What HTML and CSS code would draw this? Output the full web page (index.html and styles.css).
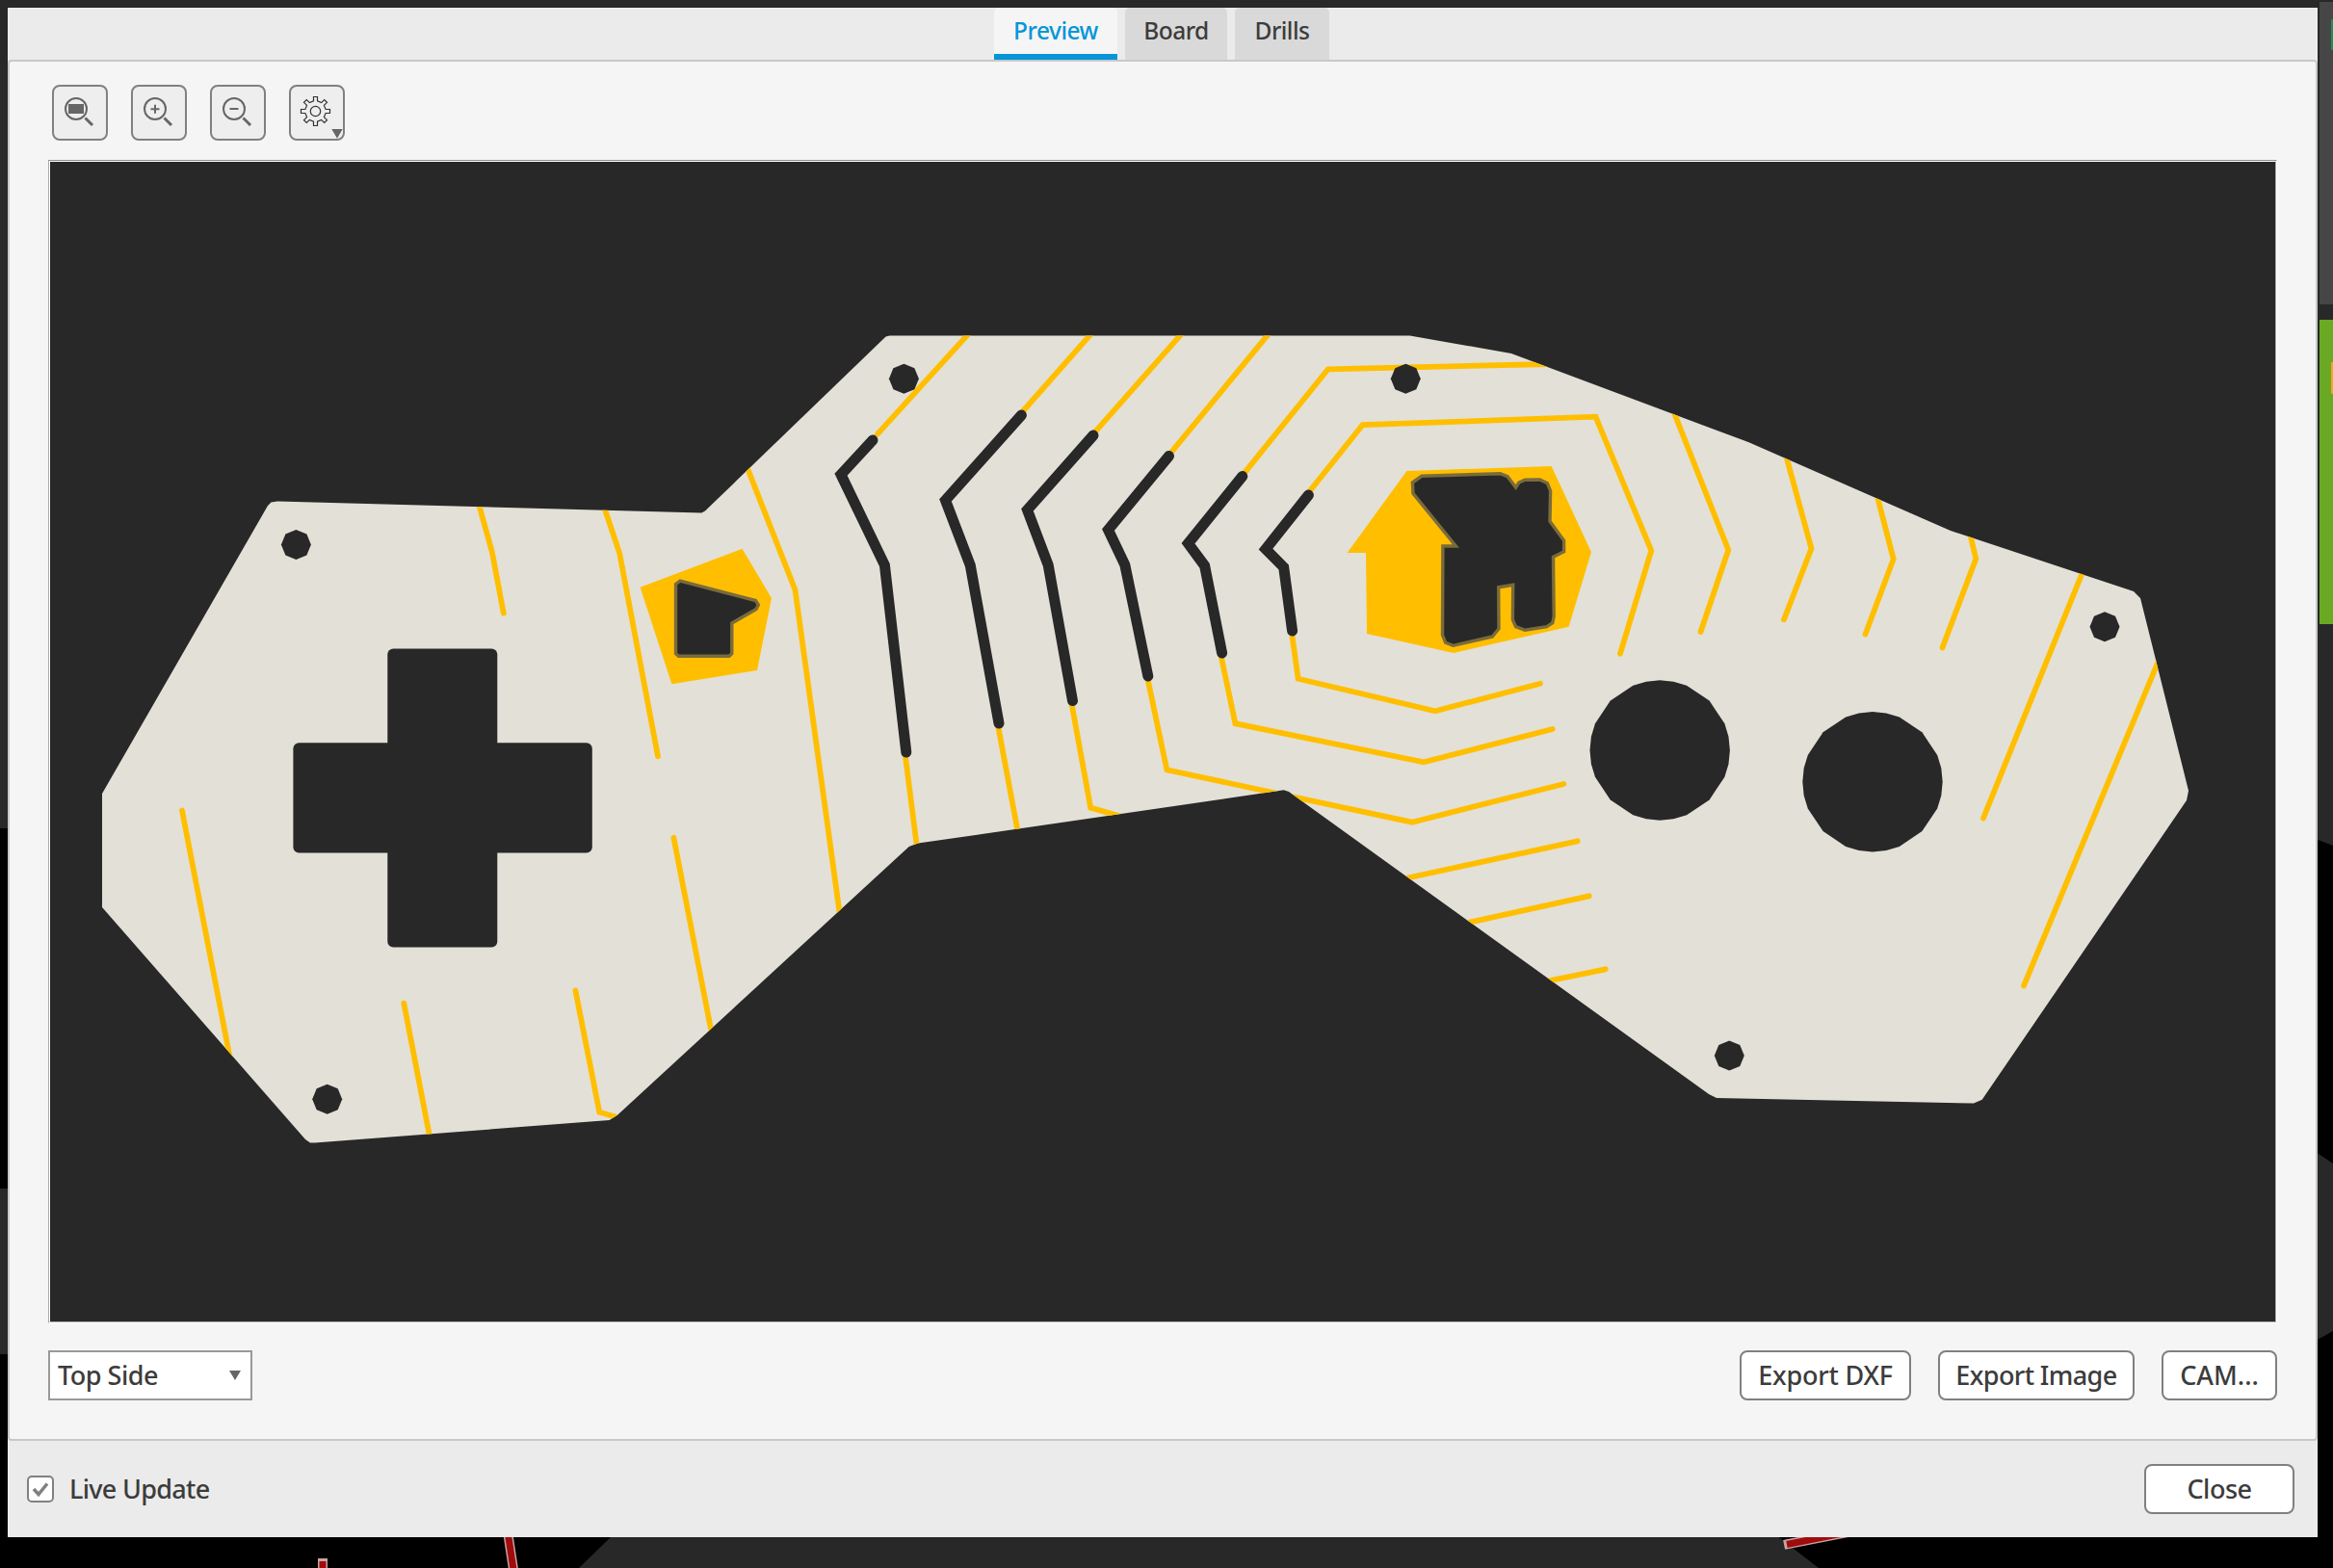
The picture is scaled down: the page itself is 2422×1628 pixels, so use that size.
FILE: index.html
```html
<!DOCTYPE html>
<html lang="en">
<head>
<meta charset="utf-8">
<title>Manufacturing Preview</title>
<link rel="stylesheet" href="styles.css">
</head>
<body>
<svg class="backdrop" viewBox="0 0 2422 1628" aria-hidden="true">
  <rect width="2422" height="1628" fill="#000"/>
  <rect width="2422" height="8" fill="#282828"/>
  <rect width="10" height="860" fill="#282828"/>
  <rect y="1234" width="10" height="172" fill="#282828"/>
  <path d="M2404 0H2422V878L2404 871ZM2404 1196L2422 1208V1382L2404 1392Z" fill="#282828"/>
  <rect x="2408" y="2" width="14" height="314" fill="#464646"/>
  <rect x="2420" y="20" width="4" height="32" rx="1" fill="#1f9150"/>
  <rect x="2408" y="332" width="14" height="316" fill="#6aa924"/>
  <rect x="2420" y="376" width="4" height="33" rx="1" fill="#f5a523"/>
  <path d="M636 1594L601 1628H1888L1844 1594Z" fill="#282828"/>
  <g class="trace-edge"><path d="M527 1590L534 1636M335 1623V1636M1857 1603L1918 1591"/></g>
  <g class="trace"><path d="M527 1590L534 1636M335 1621V1636M1855 1603.500L1918 1591"/></g>
</svg>

<main class="dialog">
  <nav class="tabs">
    <div class="tab tab-active">Preview</div>
    <div class="tab tab-board">Board</div>
    <div class="tab tab-drills">Drills</div>
  </nav>

  <section class="panel">
    <div class="toolbar">
      <button class="tool" aria-label="Zoom to fit">
        <svg class="icon" viewBox="2 2 54 54"><circle cx="25" cy="25" r="11"/><path class="handle" d="M34.5 34.5L42 42"/><rect class="solid" x="17" y="20" width="16" height="10"/></svg>
      </button>
      <button class="tool" aria-label="Zoom in">
        <svg class="icon" viewBox="2 2 54 54"><circle cx="25" cy="25" r="11"/><path class="handle" d="M34.5 34.5L42 42"/><path d="M20.5 25.3H29.5M25 20.8V29.8"/></svg>
      </button>
      <button class="tool" aria-label="Zoom out">
        <svg class="icon" viewBox="2 2 54 54"><circle cx="25" cy="25" r="11"/><path class="handle" d="M34.5 34.5L42 42"/><path d="M20.5 25H29.5"/></svg>
      </button>
      <button class="tool" aria-label="Settings">
        <svg class="icon" viewBox="2 2 54 54">
          <g class="gear" transform="translate(27.5 27.5)">
            <circle r="5.2"/>
            <path d="M-2 -10.6V-15H2V-10.6L6.1 -8.9L9.2 -12L12 -9.2L8.9 -6.1L10.6 -2H15V2H10.6L8.9 6.1L12 9.2L9.2 12L6.1 8.9L2 10.6V15H-2V10.6L-6.1 8.9L-9.2 12L-12 9.2L-8.9 6.1L-10.6 2H-15V-2H-10.6L-8.9 -6.1L-12 -9.2L-9.2 -12L-6.1 -8.9Z"/>
          </g>
          <path class="solid" d="M44.3 46H55.7L50 55.7Z"/>
        </svg>
      </button>
    </div>

    <div class="viewport">
      <svg class="board" viewBox="52 168 2310 1204">
        <defs>
          <path id="outline" d="M106 824L278 525L281.500 521.500L288 520.500L728.300 532.400L732 530.500L919.600 349.600L923.700 348.500H1463.600L1569 367L1815 459L2025 551L2215 614L2222 621L2272 821L2270 831L2057.700 1141.800L2049 1145.600L1782 1140L1774 1136L1338 822L1332.700 820.300L953 875.600L943.700 879L641 1157.700L632.700 1163L327 1186.500H322L317 1183L106 942Z"/>
          <clipPath id="edge"><use href="#outline"/></clipPath>
          <path id="drill" d="M0 -15.500L11 -11L15.500 0L11 11L0 15.500L-11 11L-15.500 0L-11 -11Z"/>
          <path id="button-hole" d="M72.700 0L71.300 14.200L67.200 27.800L51.400 51.400L27.800 67.200L14.200 71.300L0 72.700L-14.200 71.300L-27.800 67.200L-51.400 51.400L-67.200 27.800L-71.300 14.200L-72.700 0L-71.300 -14.200L-67.200 -27.800L-51.400 -51.400L-27.800 -67.200L-14.200 -71.300L0 -72.700L14.200 -71.300L27.800 -67.200L51.400 -51.400L67.200 -27.800L71.300 -14.200Z"/>
        </defs>
        <use href="#outline" class="mask"/>
        <g clip-path="url(#edge)">
          <g class="copper">
            <path d="M495 516L510.800 573L522.800 636.700"/>
            <path d="M625 520L643.200 574.400L683 785.300"/>
            <path d="M772 476L825.500 612.500L872.500 954"/>
            <path d="M189 841.500L241 1110"/>
            <path d="M419.300 1041.600L448 1190"/>
            <path d="M597.400 1028.400L622.300 1154.800L645 1161.200"/>
            <path d="M699.400 869.800L741 1084"/>
            <path d="M911 450.600L1011.500 340"/>
            <path d="M939.500 782L952.500 884"/>
            <path d="M1138.600 340L1061 428M1036.300 754.600L1057.500 868"/>
            <path d="M1232.500 340L1136.700 448.700M1112.600 731L1132.200 838.600L1165 848"/>
            <path d="M1322.500 340L1215.500 470.200M1191.800 706.500L1211.400 799.400L1466 853.700L1623.300 814"/>
            <path d="M1610 378L1378.700 383.300L1291.400 491.600M1267.800 681.800L1282.400 751.200L1478 791.300L1611.700 757"/>
            <path d="M1359.200 510.500L1414.600 441.200L1656.500 432.700L1714.300 571.700L1682 678.700M1341.200 658.500L1347.700 704.700L1490 738.300L1599 709.700"/>
            <path d="M1450 914L1637.700 873.300M1510 961L1649.700 930.300M1595 1021L1666.700 1006.300"/>
            <path d="M1735 421L1794.300 571L1765.500 656"/>
            <path d="M1852.500 467L1880.500 569.500L1852 643.300"/>
            <path d="M1947 508L1965.700 580.400L1936.500 658.500"/>
            <path d="M2043 545L2051.300 580.200L2016.500 672.500"/>
            <path d="M2164.500 588L2059 849.500M2243 681L2101 1023.500"/>
          </g>
          <g class="slots">
            <path d="M906 457L873 492.700L918.400 586.700L940.800 781"/>
            <path d="M1060.400 431L981.500 519.400L1007.300 587L1037 751"/>
            <path d="M1135 452L1066.500 529.400L1088.200 586.700L1113.500 727.600"/>
            <path d="M1213.500 473.500L1150.500 550L1167.800 586.500L1191.800 702"/>
            <path d="M1289.800 494.500L1233.500 564.200L1250.600 587.400L1268.600 678"/>
            <path d="M1358.400 514L1314 570L1332.700 589L1341.600 655"/>
          </g>
          <path class="pad" d="M664.600 609.800L770.500 569.700L801 621L786 696L697.400 710.300Z"/>
          <path class="pad" d="M1460.400 489L1610.700 484L1652 573.300L1628.600 650.700L1509 678L1419 658L1418 574H1398.600Z"/>
          <path class="cutout" d="M701.500 606.500L706 603.200L784.500 623.500L787.300 628L785 632.500L759.800 647V678.500L757 681.200H704.500L701.500 678.500Z"/>
          <path class="cutout" d="M1466.400 501L1476 494.300L1557.500 491.700L1565 494.700L1573.600 506L1576.800 501L1583.200 498.300L1598.600 498L1606.400 501.700L1609.600 509.700L1609 541.300L1623.600 561.300V572.700L1612.500 578.300L1613.200 640L1611.800 646.700L1605.700 650.700L1583.200 654.300L1573.600 650.700L1570.400 643.300L1570.700 607.300L1555.700 609.700L1556 652.700L1549.300 661L1508.600 670.300L1500.700 667.300L1497.500 659.300L1497.900 567H1511.400L1467 512.300Z"/>
        </g>
        <g class="holes">
          <rect x="402.300" y="673.500" width="114" height="310" rx="6"/>
          <rect x="304.400" y="771.200" width="310.400" height="114.300" rx="6"/>
          <use href="#drill" x="307.400" y="565.400"/>
          <use href="#drill" x="339.700" y="1141.300"/>
          <use href="#drill" x="938.400" y="393.300"/>
          <use href="#drill" x="1459.300" y="393.300"/>
          <use href="#drill" x="2185" y="650.700"/>
          <use href="#drill" x="1795.300" y="1096"/>
          <use href="#button-hole" x="1723.200" y="779"/>
          <use href="#button-hole" x="1944" y="811.700"/>
        </g>
      </svg>
    </div>

    <div class="actions">
      <div class="select"><span>Top Side</span><svg class="caret" viewBox="0 0 12 10"><path d="M0 0H12L6 10Z"/></svg></div>
      <div class="exports">
        <button class="btn btn-dxf">Export DXF</button>
        <button class="btn btn-image">Export Image</button>
        <button class="btn btn-cam">CAM...</button>
      </div>
    </div>
  </section>

  <footer class="footer">
    <label class="live">
      <span class="checkbox"><svg viewBox="0 0 24 24"><path d="M5 12L10 17.500L19 6.500"/></svg></span>
      <span class="live-text">Live Update</span>
    </label>
    <button class="btn btn-close">Close</button>
  </footer>
</main>
</body>
</html>
```
FILE: styles.css
```css
* {
  box-sizing: border-box;
}

body {
  margin: 0;
  width: 2422px;
  height: 1628px;
  padding: 8px 16px 32px 8px;
  overflow: hidden;
  background: #000;
  color: #3c3c3c;
  font: 500 27px/32px "Noto Sans", "Open Sans", sans-serif;
  letter-spacing: -0.5px;
}

.backdrop {
  position: absolute;
  left: 0;
  top: 0;
  width: 2422px;
  height: 1628px;
}

.trace,
.trace-edge {
  fill: none;
  stroke: #a00c0c;
  stroke-width: 7;
}

.trace-edge {
  stroke: #c9a3a3;
  stroke-width: 10;
  stroke-linecap: square;
}

.dialog {
  position: relative;
  display: flex;
  flex-direction: column;
  height: 1588px;
  background: #ebebeb;
}

.tabs {
  display: flex;
  flex: 0 0 54px;
  gap: 8px;
  padding-left: 1024px;
}

.tab {
  padding-top: 8px;
  border-radius: 5px 5px 0 0;
  background: #d9d9d9;
  font-size: 24.5px;
  text-align: center;
}

.tab-active {
  width: 128px;
  border-bottom: 6px solid #0696d7;
  background: #f5f5f5;
  color: #0696d7;
}

.tab-board {
  width: 106px;
}

.tab-drills {
  width: 98px;
}

.panel {
  display: flex;
  flex: 0 0 1434px;
  flex-direction: column;
  padding: 24px 40px 0;
  border: 2px solid #c8c8c8;
  border-radius: 4px;
  background: #f5f5f5;
}

.toolbar {
  display: flex;
  gap: 24px;
  padding-left: 4px;
}

.tool {
  width: 58px;
  height: 58px;
  padding: 0;
  border: 2px solid #808080;
  border-radius: 8px;
  background: #eee;
}

.icon {
  display: block;
  width: 54px;
  height: 54px;
  fill: none;
  stroke: #666;
  stroke-width: 2;
}

.icon .handle {
  stroke-width: 3;
}

.icon .solid {
  fill: #666;
  stroke: none;
}

.icon .gear {
  stroke: #333;
  stroke-width: 1.2;
}

.viewport {
  width: 2314px;
  height: 1208px;
  margin-top: 20px;
  border: 1px solid;
  border-color: #8c8c8c #fff #fff #aaa;
}

.board {
  display: block;
  width: 2312px;
  height: 1206px;
  border: 1px solid;
  border-color: #fff #aaa #aaa #fff;
  background: #282828;
}

.mask {
  fill: #e3e0d7;
}

.copper {
  fill: none;
  stroke: #ffbf00;
  stroke-width: 5.8;
  stroke-linecap: round;
}

.slots {
  fill: none;
  stroke: #282828;
  stroke-width: 11;
  stroke-linecap: round;
}

.pad {
  fill: #ffbf00;
}

.cutout {
  fill: #282828;
  stroke: #7a6b3b;
  stroke-width: 3.4;
}

.holes {
  fill: #282828;
}

.actions {
  display: flex;
  justify-content: space-between;
  margin-top: 28px;
}

.select {
  display: flex;
  align-items: center;
  justify-content: space-between;
  width: 212px;
  height: 52px;
  padding: 0 10px 0 8px;
  border: 2px solid #999;
  background: #fff;
}

.caret {
  width: 12px;
  height: 10px;
  fill: #666;
}

.exports {
  display: flex;
  gap: 28px;
}

.btn {
  height: 52px;
  padding: 0;
  border: 2px solid #808080;
  border-radius: 8px;
  background: #fff;
  color: inherit;
  font: inherit;
  letter-spacing: inherit;
  text-align: center;
}

.btn-dxf {
  width: 178px;
  letter-spacing: -0.2px;
}

.btn-image {
  width: 204px;
  letter-spacing: -0.6px;
}

.btn-cam {
  width: 120px;
  letter-spacing: 0;
}

.btn-close {
  width: 156px;
}

.footer {
  display: flex;
  flex: 1;
  align-items: center;
  justify-content: space-between;
  padding: 0 24px 0 20px;
}

.live {
  display: flex;
  align-items: center;
  gap: 16px;
}

.live-text {
  letter-spacing: -0.7px;
}

.checkbox {
  width: 28px;
  height: 28px;
  border: 2px solid #808080;
  border-radius: 5px;
  background: #fff;
}

.checkbox svg {
  display: block;
  width: 24px;
  height: 24px;
  fill: none;
  stroke: #808080;
  stroke-width: 3.5;
}
```
